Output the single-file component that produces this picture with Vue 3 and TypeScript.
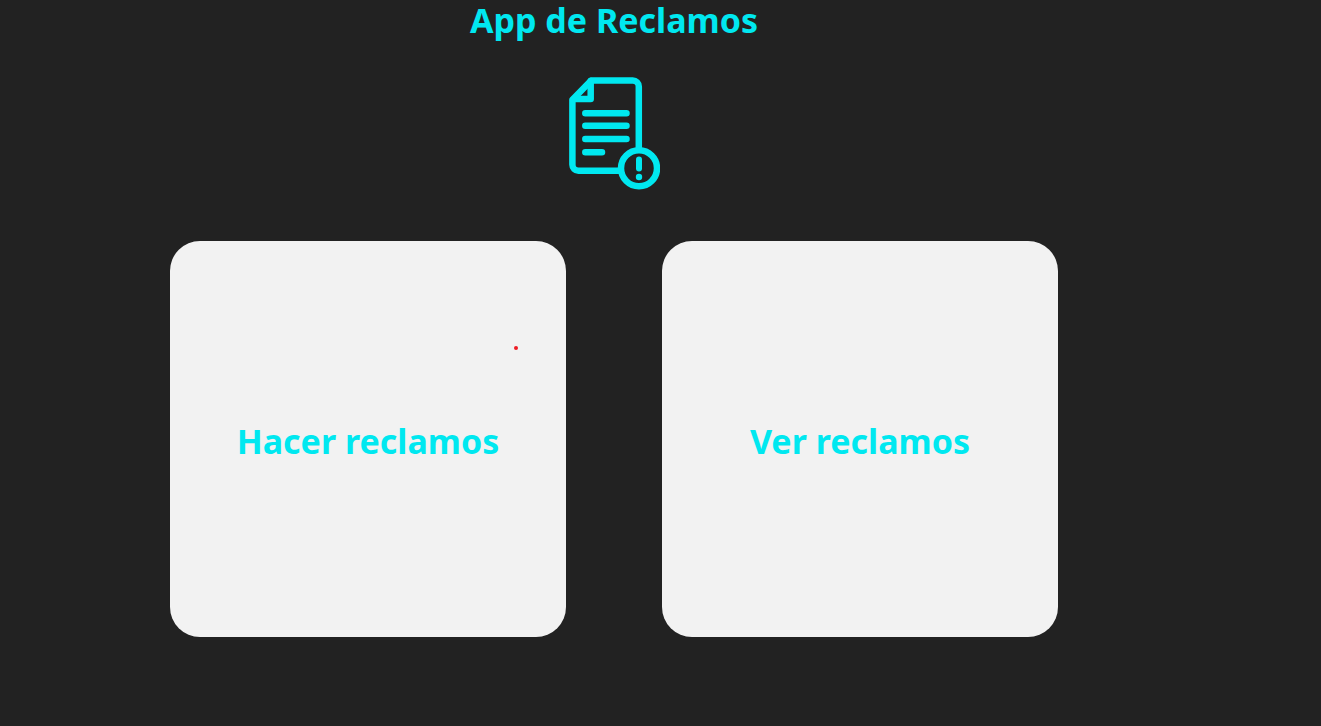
<script setup lang="ts">
interface Action {
  id: string
  label: string
  marked: boolean
}

const title = 'App de Reclamos'
const actions: Action[] = [
  { id: 'create', label: 'Hacer reclamos', marked: true },
  { id: 'list', label: 'Ver reclamos', marked: false },
]
</script>

<template>
  <main class="page">
    <h1 class="title">{{ title }}</h1>
    <svg class="logo" viewBox="14 12 91 113" fill="none" aria-hidden="true">
      <g stroke="currentColor" stroke-width="6.5" stroke-linecap="round" stroke-linejoin="round">
        <path
          stroke-linecap="butt"
          d="M83.8 84V21.5a6 6 0 0 0-6-6H36.2L17.4 34.8V99.7a6 6 0 0 0 6 6H65"
        />
        <path d="M35.7 16V34H20" />
        <path d="M30.3 48.2H71.500M30.3 60.8H71.5M30.3 74H71.5M30.3 87.2H47" />
        <circle cx="84" cy="103.3" r="18" />
        <path stroke-width="6" d="M84 94.5V103.5" />
      </g>
      <circle cx="84" cy="112" r="3.2" fill="currentColor" />
    </svg>
    <nav class="cards" aria-label="Reclamos">
      <button v-for="action in actions" :key="action.id" type="button" class="card">
        {{ action.label }}
        <span v-if="action.marked" class="dot"></span>
      </button>
    </nav>
  </main>
</template>

<style>
body {
  margin: 0;
  background: #222222;
}
</style>

<style scoped>
.page {
  box-sizing: border-box;
  min-height: 100vh;
  padding: 0 93px 40px 0;
  display: flex;
  flex-direction: column;
  align-items: center;
  background: #222222;
  color: #00e8f0;
  font-family: "Segoe UI", "Noto Sans", "Open Sans", sans-serif;
}

.title {
  margin: 0;
  font-size: 34px;
  line-height: 40px;
  font-weight: 700;
}

.logo {
  width: 91px;
  height: 113px;
  margin: 37px 0 51px;
}

.cards {
  width: 100%;
  max-width: 888px;
  display: grid;
  grid-template-columns: 1fr 1fr;
  gap: 96px;
}

.card {
  position: relative;
  aspect-ratio: 1;
  margin: 0;
  padding: 4px 0 0;
  border: 0;
  border-radius: 30px;
  background: #f2f2f2;
  color: inherit;
  font: inherit;
  font-size: 34px;
  line-height: 40px;
  font-weight: 700;
  cursor: pointer;
}

.dot {
  position: absolute;
  top: 105px;
  right: 48px;
  width: 4px;
  height: 4px;
  border-radius: 50%;
  background: #ee1c24;
}
</style>
